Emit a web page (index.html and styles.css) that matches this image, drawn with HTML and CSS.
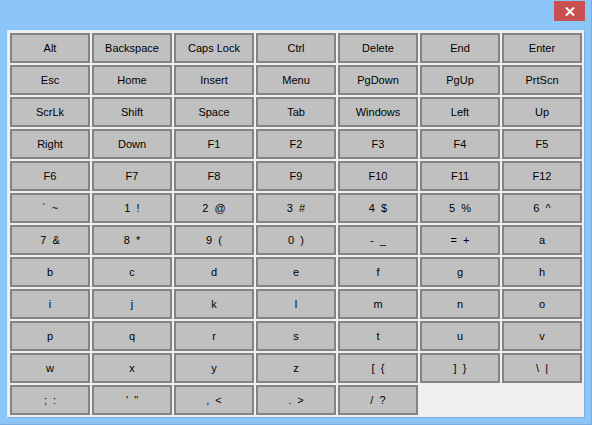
FILE: index.html
```html
<!DOCTYPE html>
<html>
<head>
<meta charset="utf-8">
<link rel="stylesheet" href="styles.css">
</head>
<body>
<div class="window">
  <div class="titlebar">
    <div class="close">
      <svg width="10" height="9" viewBox="0 0 10 9"><path d="M1 0.5 L9 8.5 M9 0.5 L1 8.5" stroke="#fff" stroke-width="2" fill="none"/></svg>
    </div>
  </div>
  <div class="client">
    <div class="keys">
      <div class="key">Alt</div><div class="key">Backspace</div><div class="key">Caps Lock</div><div class="key">Ctrl</div><div class="key">Delete</div><div class="key">End</div><div class="key">Enter</div>
      <div class="key">Esc</div><div class="key">Home</div><div class="key">Insert</div><div class="key">Menu</div><div class="key">PgDown</div><div class="key">PgUp</div><div class="key">PrtScn</div>
      <div class="key">ScrLk</div><div class="key">Shift</div><div class="key">Space</div><div class="key">Tab</div><div class="key">Windows</div><div class="key">Left</div><div class="key">Up</div>
      <div class="key">Right</div><div class="key">Down</div><div class="key">F1</div><div class="key">F2</div><div class="key">F3</div><div class="key">F4</div><div class="key">F5</div>
      <div class="key">F6</div><div class="key">F7</div><div class="key">F8</div><div class="key">F9</div><div class="key">F10</div><div class="key">F11</div><div class="key">F12</div>
      <div class="key">`  ~</div><div class="key">1  !</div><div class="key">2  @</div><div class="key">3  #</div><div class="key">4  $</div><div class="key">5  %</div><div class="key">6  ^</div>
      <div class="key">7  &amp;</div><div class="key">8  *</div><div class="key">9  (</div><div class="key">0  )</div><div class="key">-  _</div><div class="key">=  +</div><div class="key">a</div>
      <div class="key">b</div><div class="key">c</div><div class="key">d</div><div class="key">e</div><div class="key">f</div><div class="key">g</div><div class="key">h</div>
      <div class="key">i</div><div class="key">j</div><div class="key">k</div><div class="key">l</div><div class="key">m</div><div class="key">n</div><div class="key">o</div>
      <div class="key">p</div><div class="key">q</div><div class="key">r</div><div class="key">s</div><div class="key">t</div><div class="key">u</div><div class="key">v</div>
      <div class="key">w</div><div class="key">x</div><div class="key">y</div><div class="key">z</div><div class="key">[  {</div><div class="key">]  }</div><div class="key">\  |</div>
      <div class="key">;  :</div><div class="key">'  "</div><div class="key">,  &lt;</div><div class="key">.  &gt;</div><div class="key">/  ?</div>
    </div>
  </div>
</div>
</body>
</html>
```
FILE: styles.css
```css
html, body {
  margin: 0;
  padding: 0;
}
body {
  width: 592px;
  height: 425px;
  overflow: hidden;
  background: #8cc5f7;
  font-family: "Liberation Sans", Arial, sans-serif;
  font-size: 11px;
  color: #000;
}
.window {
  box-sizing: border-box;
  width: 592px;
  height: 425px;
  padding: 0 6px 6px 7px;
  border-right: 1px solid #79aee0;
  border-bottom: 1px solid #79aee0;
  display: flex;
  flex-direction: column;
}
.titlebar {
  height: 30px;
  display: flex;
  justify-content: flex-end;
  align-items: flex-start;
}
.close {
  width: 31px;
  height: 20px;
  margin-top: 1px;
  background: #c75050;
  display: flex;
  align-items: center;
  justify-content: center;
}
.client {
  width: 572px;
  height: 382px;
  padding: 2px;
  border: 1px solid #7aafe0;
  border-top-color: #d8eafb;
  border-left-color: #d8eafb;
  background: #f0f0f0;
}
.keys {
  display: grid;
  grid-template-columns: repeat(7, 80px);
  grid-template-rows: repeat(12, 30px);
  gap: 2px;
}
.key {
  box-sizing: border-box;
  border: 2px solid #848484;
  background: #c0c0c0;
  display: flex;
  align-items: center;
  justify-content: center;
  padding-top: 1px;
  white-space: pre;
  line-height: 1;
}
```
